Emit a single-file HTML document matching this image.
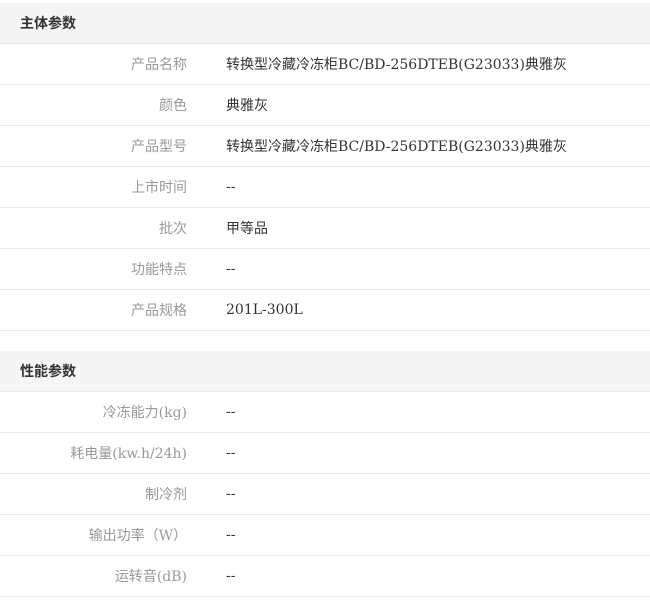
<!DOCTYPE html>
<html><head><meta charset="utf-8"><style>
*{margin:0;padding:0;box-sizing:border-box}
body{width:650px;height:603px;background:#fff;font-family:"DejaVu Serif","Noto Sans CJK SC",serif;font-size:14px;overflow:hidden}
.c{font-family:"Noto Sans CJK SC",sans-serif;font-size:14px}
.h{height:41px;background:#f5f5f5;border-bottom:1px solid #e8e8e8;font-family:"Liberation Sans","Noto Sans CJK SC",sans-serif;font-weight:bold;color:#333;line-height:40px;padding-left:20px;font-size:14px}
.r{height:41px;border-bottom:1px solid #e8e8e8;display:flex;line-height:40px}
.l{width:187px;text-align:right;color:#999}
.v{margin-left:39px;color:#333}
</style></head><body>
<div style="height:3px"></div>
<div class="h">主体参数</div>
<div class="r"><div class="l c">产品名称</div><div class="v"><span class="c">转换型冷藏冷冻柜</span>BC/BD-256DTEB(G23033)<span class="c">典雅灰</span></div></div>
<div class="r"><div class="l c">颜色</div><div class="v c">典雅灰</div></div>
<div class="r"><div class="l c">产品型号</div><div class="v"><span class="c">转换型冷藏冷冻柜</span>BC/BD-256DTEB(G23033)<span class="c">典雅灰</span></div></div>
<div class="r"><div class="l c">上市时间</div><div class="v">--</div></div>
<div class="r"><div class="l c">批次</div><div class="v c">甲等品</div></div>
<div class="r"><div class="l c">功能特点</div><div class="v">--</div></div>
<div class="r"><div class="l c">产品规格</div><div class="v">201L-300L</div></div>
<div style="height:20px"></div>
<div class="h">性能参数</div>
<div class="r"><div class="l"><span class="c">冷冻能力</span>(kg)</div><div class="v">--</div></div>
<div class="r"><div class="l"><span class="c">耗电量</span>(kw.h/24h)</div><div class="v">--</div></div>
<div class="r"><div class="l c">制冷剂</div><div class="v">--</div></div>
<div class="r"><div class="l"><span class="c">输出功率（</span>W<span class="c">）</span></div><div class="v">--</div></div>
<div class="r"><div class="l"><span class="c">运转音</span>(dB)</div><div class="v">--</div></div>
</body></html>
